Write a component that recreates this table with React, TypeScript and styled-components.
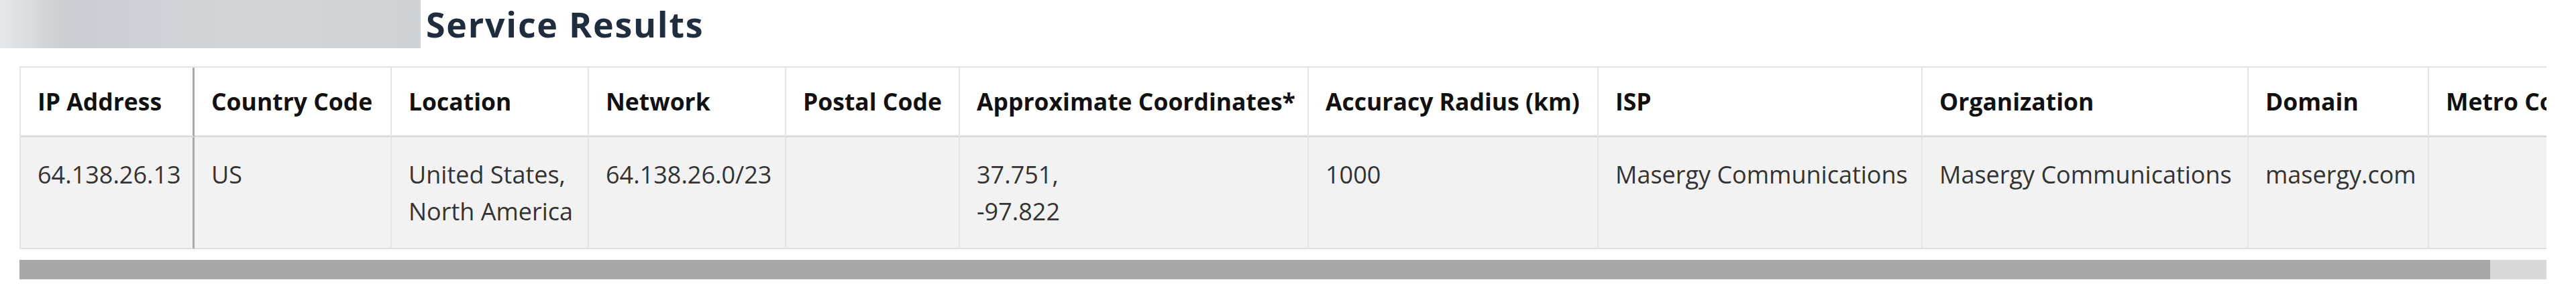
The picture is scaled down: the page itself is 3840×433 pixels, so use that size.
import styled, { createGlobalStyle } from 'styled-components';

interface Column {
    label: string;
    width: number;
    lines: string[];
}

const columns: Column[] = [
    { label: 'IP Address', width: 259, lines: ['64.138.26.13'] },
    { label: 'Country Code', width: 294, lines: ['US'] },
    { label: 'Location', width: 294, lines: ['United States,', 'North America'] },
    { label: 'Network', width: 294, lines: ['64.138.26.0/23'] },
    { label: 'Postal Code', width: 259, lines: [] },
    { label: 'Approximate Coordinates*', width: 520, lines: ['37.751,', '-97.822'] },
    { label: 'Accuracy Radius (km)', width: 432, lines: ['1000'] },
    { label: 'ISP', width: 483, lines: ['Masergy Communications'] },
    { label: 'Organization', width: 486, lines: ['Masergy Communications'] },
    { label: 'Domain', width: 269, lines: ['masergy.com'] },
    { label: 'Metro Code', width: 263, lines: [] }
];

const tableWidth = columns.reduce((sum, c) => sum + c.width, 0);
const visibleWidth = 3767;

const GlobalStyle = createGlobalStyle`
    body {
        margin: 0;
        background: #fff;
        font-family: "Open Sans", "Noto Sans", Arial, sans-serif;
    }
`;

const StyledPage = styled.div`
    display: flex;
    flex-direction: column;
`;

const StyledTitleRow = styled.div`
    display: flex;
    align-items: center;
    gap: 8px;
    height: 72px;
`;

const StyledRedacted = styled.div`
    width: 627px;
    height: 72px;
    background: linear-gradient(90deg, #e7e8ea 0%, #c9ccd0 16%, #cfd2d6 40%, #d3d6d9 62%, #ced1d5 100%);
`;

const StyledTitle = styled.h2`
    margin: 0;
    font-family: "Open Sans", "Noto Sans", sans-serif;
    font-weight: 700;
    font-size: 52px;
    line-height: 1;
    letter-spacing: 1.7px;
    color: #1f2d3f;
`;

const StyledScrollArea = styled.div`
    display: flex;
    flex-direction: column;
    gap: 16px;
    margin: 27px 44px 0 29px;
`;

const StyledTableWrap = styled.div`
    overflow: hidden;
`;

const StyledTable = styled.table<{ $width: number }>`
    width: ${p => p.$width}px;
    table-layout: fixed;
    border-collapse: separate;
    border-spacing: 0;
    border-top: 2px solid #e1e4e8;
    border-left: 2px solid #e1e4e8;
    line-height: 55px;
`;

const StyledHeadCell = styled.th<{ $sticky: boolean }>`
    padding: 23px 25px;
    text-align: left;
    vertical-align: middle;
    white-space: nowrap;
    font-size: 35.5px;
    font-weight: 700;
    color: #111;
    background: #fff;
    border-bottom: 3px solid #dcdcdc;
    border-right: ${p => (p.$sticky ? '3px solid #a9a9a9' : '2px solid #e2e5e9')};
`;

const StyledCell = styled.td<{ $sticky: boolean }>`
    padding: 28px 25px 27px;
    vertical-align: top;
    white-space: nowrap;
    font-size: 36px;
    color: #333;
    background: #f2f2f2;
    border-bottom: 2px solid #dedede;
    border-right: ${p => (p.$sticky ? '3px solid #a9a9a9' : '2px solid #e2e5e9')};
`;

const StyledScrollTrack = styled.div`
    display: flex;
    height: 29px;
    background: #d9d9d9;
`;

const StyledScrollThumb = styled.div`
    height: 100%;
    background: #a8a8a8;
`;

const App = () => {
    return (
        <StyledPage>
            <GlobalStyle />
            <StyledTitleRow>
                <StyledRedacted />
                <StyledTitle>Service Results</StyledTitle>
            </StyledTitleRow>
            <StyledScrollArea>
                <StyledTableWrap>
                    <StyledTable $width={tableWidth}>
                        <colgroup>
                            {columns.map(c => (
                                <col key={c.label} style={{ width: c.width }} />
                            ))}
                        </colgroup>
                        <thead>
                            <tr>
                                {columns.map((c, i) => (
                                    <StyledHeadCell key={c.label} $sticky={i === 0}>
                                        {c.label}
                                    </StyledHeadCell>
                                ))}
                            </tr>
                        </thead>
                        <tbody>
                            <tr>
                                {columns.map((c, i) => (
                                    <StyledCell key={c.label} $sticky={i === 0}>
                                        {c.lines.map((line, j) => (
                                            <div key={j}>{line}</div>
                                        ))}
                                    </StyledCell>
                                ))}
                            </tr>
                        </tbody>
                    </StyledTable>
                </StyledTableWrap>
                <StyledScrollTrack>
                    <StyledScrollThumb style={{ width: `${(visibleWidth / tableWidth) * 100}%` }} />
                </StyledScrollTrack>
            </StyledScrollArea>
        </StyledPage>
    );
};

export default App;
